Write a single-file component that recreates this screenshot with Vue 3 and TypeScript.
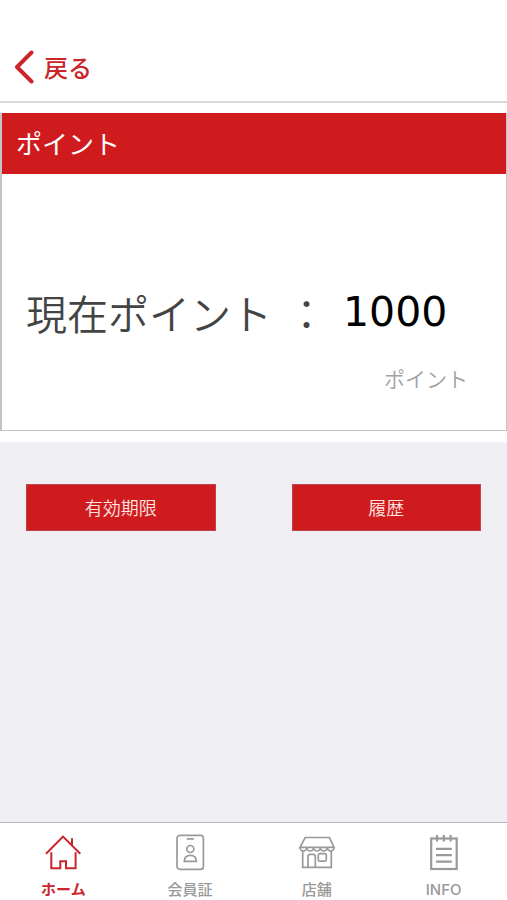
<script setup lang="ts">
import { ref } from 'vue'

type TabId = 'home' | 'card' | 'shop' | 'info'

interface Tab {
  id: TabId
  label: string
}

const tabs: Tab[] = [
  { id: 'home', label: 'ホーム' },
  { id: 'card', label: '会員証' },
  { id: 'shop', label: '店舗' },
  { id: 'info', label: 'INFO' },
]

const activeTab = ref<TabId>('home')
const points = ref<number>(1000)
</script>

<template>
  <div class="screen">
    <header class="nav">
      <a class="back" href="#">
        <svg class="chevron" viewBox="0 0 20 34" aria-hidden="true">
          <path d="M17.500 2.500L3 17L17.500 31.500" />
        </svg>
        <span>戻る</span>
      </a>
    </header>

    <main class="content">
      <section class="panel">
        <div class="card">
          <h1 class="card-title">ポイント</h1>
          <div class="card-body">
            <p class="balance">
              <span class="balance-label">現在ポイント</span>
              <span class="colon">：</span>
              <span class="balance-value">{{ points }}</span>
            </p>
            <p class="unit">ポイント</p>
          </div>
        </div>
      </section>

      <div class="actions">
        <button class="action" type="button">有効期限</button>
        <button class="action" type="button">履歴</button>
      </div>
    </main>

    <nav class="tabbar">
      <a
        v-for="tab in tabs"
        :key="tab.id"
        class="tab"
        :class="{ active: tab.id === activeTab }"
        href="#"
        @click.prevent="activeTab = tab.id"
      >
        <svg class="icon" viewBox="0 0 38 38" aria-hidden="true">
          <g v-if="tab.id === 'home'">
            <path d="M2 19.700L19 2.600L36.300 19.700M28 11V4.300" />
            <path d="M7.300 18.300V34.300H16.300V27.300H22V34.300H31.600V18.300" />
          </g>
          <g v-else-if="tab.id === 'card'">
            <rect x="6" y="1.400" width="26.400" height="34" rx="3" />
            <path d="M15.700 4.900H23" />
            <circle cx="19.300" cy="15" r="3.500" />
            <path d="M13.300 27.300C13.300 23.500 15.800 21.300 19.300 21.300S25.300 23.500 25.300 27.300Z" />
          </g>
          <g v-else-if="tab.id === 'shop'">
            <path d="M7.200 3.500H31.400L36 13.300H2Z" />
            <path
              d="M2 13.300a3.400 3.700 0 0 0 6.800 0a3.400 3.700 0 0 0 6.800 0a3.400 3.700 0 0 0 6.800 0a3.400 3.700 0 0 0 6.800 0a3.400 3.700 0 0 0 6.800 0"
            />
            <path d="M4.700 17V33.300H33.300V17" />
            <path d="M10 33.300V22.500Q10 20.300 12.200 20.300H15.100Q17.300 20.300 17.300 22.500V33.300" />
            <rect x="20.300" y="19.600" width="8" height="7.600" rx="1.500" />
          </g>
          <g v-else class="bold-lines">
            <rect x="6.200" y="4.500" width="25.500" height="30.500" />
            <path d="M12 1V7.600M18.800 1V7.600M25.600 1V7.600" />
            <path d="M11 14.800H26.800M11 21.200H26.800M11 27.700H26.800" />
          </g>
        </svg>
        <span>{{ tab.label }}</span>
      </a>
    </nav>
  </div>
</template>

<style>
body {
  margin: 0;
}
</style>

<style scoped>
.screen {
  display: flex;
  flex-direction: column;
  min-height: 100vh;
  background: #eeeef3;
  font-family: "Noto Sans CJK JP", sans-serif;
}

.nav {
  display: flex;
  padding: 50px 14px 17px;
  background: #fff;
  border-bottom: 2px solid #d9d9db;
}

.back {
  display: flex;
  align-items: center;
  gap: 10px;
  color: #c9252b;
  font-size: 24px;
  font-weight: 500;
  line-height: 34px;
  text-decoration: none;
}

.chevron {
  width: 20px;
  height: 34px;
  fill: none;
  stroke: currentColor;
  stroke-width: 4;
  stroke-linecap: round;
  stroke-linejoin: round;
}

.content {
  flex: 1;
}

.panel {
  padding: 10px 0 11px;
  background: #fff;
}

.card {
  border: 1px solid #c4c4c4;
  border-top: 0;
  border-left-width: 2px;
}

.card-title {
  margin: 0;
  padding: 0 14px 2px;
  background: #cf1b1d;
  color: #fff;
  font-size: 26px;
  font-weight: 400;
  line-height: 59px;
}

.card-body {
  padding: 108px 38px 36px 24px;
}

.balance {
  display: flex;
  align-items: center;
  margin: 0;
  line-height: 60px;
}

.balance-label {
  color: #444;
  font-size: 41px;
  font-weight: 350;
}

.colon {
  margin: 0 16px 0 14px;
  color: #444;
  font-size: 41px;
  font-weight: 350;
}

.balance-value {
  color: #000;
  font-family: "DejaVu Sans", sans-serif;
  font-size: 41px;
}

.unit {
  margin: 20px 0 0;
  color: #a2a2a2;
  font-size: 21px;
  font-weight: 350;
  line-height: 32px;
  text-align: right;
}

.actions {
  display: grid;
  grid-template-columns: 1fr 1fr;
  gap: 76px;
  padding: 42px 26px;
}

.action {
  height: 47px;
  padding: 0 0 2px;
  border: 1px solid #b8464c;
  border-radius: 0;
  background: #cf1b1d;
  color: #ffe4e2;
  font-family: inherit;
  font-size: 18px;
  font-weight: 350;
}

.tabbar {
  display: grid;
  grid-template-columns: repeat(4, 1fr);
  padding: 11px 0 0;
  border-top: 1px solid #b8b8bc;
  background: #fff;
}

.tab {
  display: flex;
  flex-direction: column;
  align-items: center;
  gap: 7px;
  color: #999;
  font-family: Inter, "Noto Sans CJK JP", sans-serif;
  font-size: 15px;
  font-weight: 500;
  line-height: 21px;
  text-decoration: none;
}

.tab.active {
  color: #c9252b;
  font-weight: 700;
}

.icon {
  width: 38px;
  height: 38px;
  fill: none;
  stroke: currentColor;
  stroke-width: 1.7;
}

.active .icon {
  stroke-width: 2;
}

.bold-lines {
  stroke-width: 2.2;
}
</style>
